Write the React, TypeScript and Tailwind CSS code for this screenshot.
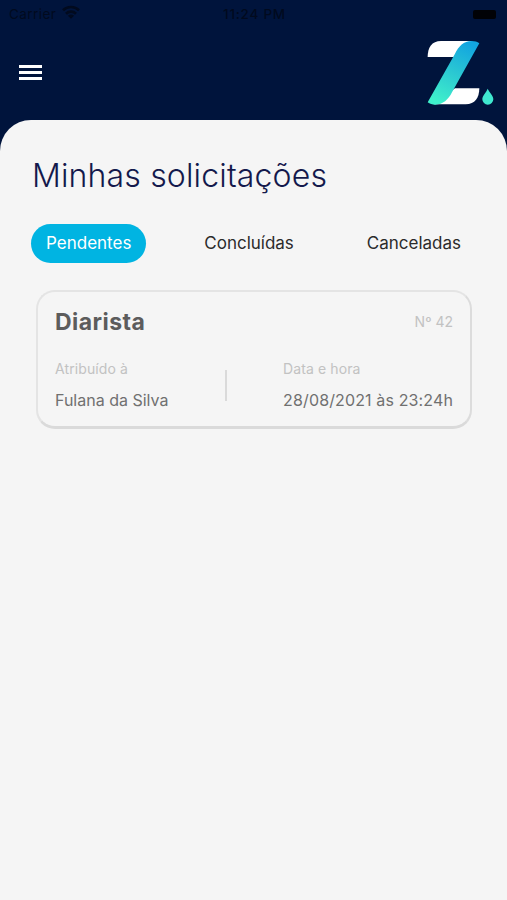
import { useState } from "react";

interface Request {
  id: number;
  service: string;
  assignee: string;
  date: string;
}

const tabs = ["Pendentes", "Concluídas", "Canceladas"];

const requests: Request[] = [
  {
    id: 42,
    service: "Diarista",
    assignee: "Fulana da Silva",
    date: "28/08/2021 às 23:24h",
  },
];

const Logo = () => (
  <svg width="67" height="65" viewBox="50 120 201 195">
    <defs>
      <linearGradient id="stripe" x1="0.7" y1="0" x2="0.3" y2="1">
        <stop offset="0" stopColor="#12a5e0" />
        <stop offset="0.5" stopColor="#2bc8d2" />
        <stop offset="1" stopColor="#3ff0cb" />
      </linearGradient>
    </defs>
    <path d="M52 171C52 143 64 123 92 123H185L150 171Z" fill="#fff" />
    <path d="M70 313L134 265H207C207 293 194 313 166 313Z" fill="#fff" />
    <path
      d="M207 130C201 125 193 123 184 123C160 123 145 139 134 161L52 307C58 312 66 314 75 314C98 314 114 299 125 277Z"
      fill="url(#stripe)"
    />
    <path d="M232 266C238 279 249 286 249 298A16.5 16 0 0 1 216 298C216 286 227 279 232 266Z" fill="#3fe8cf" />
  </svg>
);

const StatusBar = () => (
  <div className="grid h-7 grid-cols-3 items-center pl-[9px] pr-[11px] text-[13.5px] text-[#010a1e]">
    <div className="flex items-center gap-1.5">
      <span className="tracking-[0.45px]">Carrier</span>
      <svg className="-mt-1" width="18" height="14" viewBox="0 0 18 14" fill="none" stroke="currentColor" strokeWidth="2.7">
        <path d="M1 5.2C5.4 0.9 12.6 0.9 17 5.2" />
        <path d="M4 8.7C6.8 6 11.2 6 14 8.7" />
        <path d="M9 13.8L5.9 10.7C7.6 9.2 10.4 9.2 12.1 10.7Z" fill="currentColor" stroke="none" />
      </svg>
    </div>
    <span className="pl-1 text-center font-medium tracking-[0.75px]">11:24 PM</span>
    <div className="h-[9px] w-[23px] justify-self-end rounded-[2px] bg-[#010206]" />
  </div>
);

const RequestCard = ({ request }: { request: Request }) => (
  <div className="h-[139px] rounded-[19px] border-2 border-b-[3px] border-[#e4e4e4] border-b-[#dadada] border-r-[#dcdcdc] px-[17px] pt-[14px]">
    <div className="flex items-center justify-between">
      <h2 className="text-[23px] leading-8 font-bold tracking-[0.45px] text-[#5c5c5c]">{request.service}</h2>
      <span className="-mt-0.5 text-[14px] text-[#c2c2c2]">Nº {request.id}</span>
    </div>
    <div className="mt-[21px] flex items-start">
      <div className="w-[170px]">
        <p className="text-[14px] leading-5 tracking-[0.1px] text-[#c2c2c2]">Atribuído à</p>
        <p className="mt-2.5 text-[16px] leading-[22px] text-[#707070]">{request.assignee}</p>
      </div>
      <div className="mt-[11px] h-[31px] w-[2px] bg-[#dadada]" />
      <div className="ml-auto whitespace-nowrap">
        <p className="text-[14px] leading-5 tracking-[0.1px] text-[#c2c2c2]">Data e hora</p>
        <p className="mt-2.5 text-[16px] leading-[22px] tracking-[0.13px] text-[#707070]">{request.date}</p>
      </div>
    </div>
  </div>
);

const App = () => {
  const [activeTab, setActiveTab] = useState("Pendentes");

  return (
    <div className="flex h-[900px] w-full flex-col overflow-hidden bg-[#00143c] font-['Inter','Liberation_Sans',sans-serif]">
      <StatusBar />
      <header className="flex h-[92px] items-start justify-between pl-[19px] pr-[13px] pt-3">
        <button className="mt-[25px] flex w-[23px] flex-col gap-[3px]" aria-label="Menu">
          <span className="h-[3px] w-full bg-white" />
          <span className="h-[3px] w-full bg-white" />
          <span className="h-[3px] w-full bg-white" />
        </button>
        <Logo />
      </header>
      <main className="flex-1 rounded-t-[31px] bg-[#f5f5f5] pt-9">
        <h1 className="pl-8 text-[32px] leading-10 font-light tracking-[0.16px] text-[#14194c]">Minhas solicitações</h1>
        <nav className="mt-7 flex items-center justify-between pl-[31px] pr-[31px]">
          {tabs.map((tab) => (
            <button
              key={tab}
              onClick={() => setActiveTab(tab)}
              className={`h-[39px] rounded-full px-[15px] text-[17px] ${
                tab === activeTab ? "bg-[#00b4e2] text-white" : "text-[#2b2b2b]"
              }`}
            >
              {tab}
            </button>
          ))}
        </nav>
        <div className="mt-[27px] pl-9 pr-[35px]">
          {requests.map((request) => (
            <RequestCard key={request.id} request={request} />
          ))}
        </div>
      </main>
    </div>
  );
};

export default App;
